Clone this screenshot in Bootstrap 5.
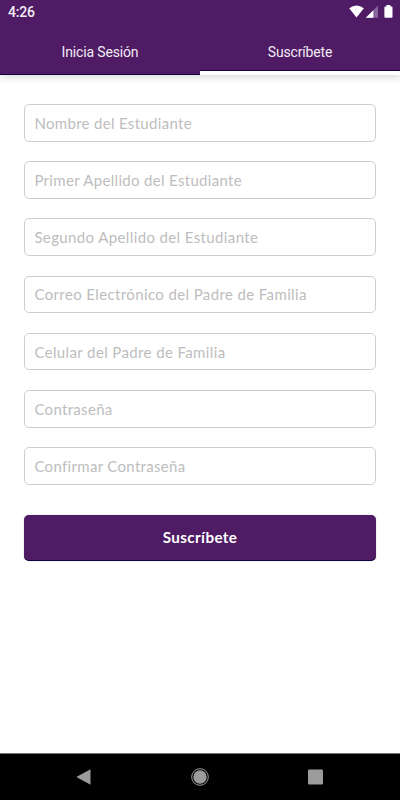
<!DOCTYPE html>
<html lang="es">
<head>
<meta charset="utf-8">
<meta name="viewport" content="width=device-width, initial-scale=1">
<title>Suscríbete</title>
<link href="https://cdn.jsdelivr.net/npm/bootstrap@5.3.0/dist/css/bootstrap.min.css" rel="stylesheet">
<style>
  body { font-family: Lato, "Liberation Sans", sans-serif; height: 800px; overflow: hidden; }
  .app-header { background: #4f1b64; height: 75px; box-shadow: inset 0 -1px #160044, 0 1px 9px rgba(0,0,0,.2); }
  .status-bar { height: 25px; padding: 0 7px 0 8px; color: #f3edf5; font: 500 14px/25px Roboto, sans-serif; letter-spacing: -.2px; }
  .auth-tabs { height: 50px; --bs-nav-link-padding-y: 0; --bs-nav-link-padding-x: 0; }
  .auth-tabs .nav-link { height: 50px; width: 100%; border: 0; border-radius: 0; background: transparent; color: #f2ebf4; font: 400 14px/54px Roboto, sans-serif; letter-spacing: -.16px; }
  .auth-tabs .nav-link.active { border-bottom: 4px solid #fff; box-shadow: inset 0 -1px #160044; }
  .signup { padding: 29px 24.4px 0 24.4px; }
  .signup .form-control { height: 37.6px; margin-bottom: 19.6px; padding: 0 9px; border: 1px solid #cecece; border-radius: 5px; font-size: 15px; letter-spacing: .32px; }
  .signup .form-control::placeholder { color: #bdbdbd; opacity: 1; }
  .signup .wider { letter-spacing: .38px; }
  .send { --bs-btn-color: #fff; --bs-btn-bg: #4f1b64; --bs-btn-hover-bg: #5d2575; --bs-btn-hover-color: #fff; height: 46px; margin-top: 10.4px; padding: 0; border: 0; border-bottom: 1px solid #160044; border-radius: 5px; box-shadow: 0 0 1px rgba(0,0,0,.5); font-size: 15.2px; font-weight: 700; letter-spacing: .35px; }
  .system-bar { height: 47px; border-top: 1px solid #777; background: #000; }
  .system-bar > div { width: 115.6px; }
</style>
<script src="https://cdn.jsdelivr.net/npm/bootstrap@5.3.0/dist/js/bootstrap.bundle.min.js" defer></script>
</head>
<body class="d-flex flex-column bg-white">
<header class="app-header flex-shrink-0">
  <div class="status-bar d-flex justify-content-between">
    <span>4:26</span>
    <svg width="46" height="25" viewBox="347 0 46 25" fill="#fff" aria-hidden="true">
      <path d="M349.2 8.2Q356.5 2.8 363.9 8.2L356.5 17.6Z"/>
      <path d="M378 5.5V17.8H365.8Z" fill="#86649a"/>
      <path d="M373.4 10.2V17.8H365.8Z"/>
      <path d="M386.4 5H390.4V6.5H391.5Q392.5 6.5 392.5 7.5V16.8Q392.5 17.8 391.5 17.8H385.4Q384.4 17.8 384.4 16.8V7.5Q384.4 6.5 385.4 6.5H386.4Z"/>
    </svg>
  </div>
  <ul class="nav nav-fill auth-tabs">
    <li class="nav-item w-50"><button class="nav-link" type="button">Inicia Sesión</button></li>
    <li class="nav-item w-50"><button class="nav-link active" type="button">Suscríbete</button></li>
  </ul>
</header>
<main class="flex-grow-1">
  <form class="signup">
    <input class="form-control" type="text" placeholder="Nombre del Estudiante">
    <input class="form-control" type="text" placeholder="Primer Apellido del Estudiante">
    <input class="form-control wider" type="text" placeholder="Segundo Apellido del Estudiante">
    <input class="form-control wider" type="email" placeholder="Correo Electrónico del Padre de Familia">
    <input class="form-control wider" type="tel" placeholder="Celular del Padre de Familia">
    <input class="form-control" type="password" placeholder="Contraseña">
    <input class="form-control" type="password" placeholder="Confirmar Contraseña">
    <button class="btn send w-100" type="button">Suscríbete</button>
  </form>
</main>
<footer class="system-bar d-flex justify-content-center align-items-center flex-shrink-0">
  <div class="text-center"><svg class="d-block mx-auto" width="18" height="18" fill="#9b9b9b"><path d="M1.3 9 15.5 1.2V16.8Z"/></svg></div>
  <div class="text-center"><svg class="d-block mx-auto" width="18" height="18"><circle cx="9" cy="9" r="8.3" fill="none" stroke="#9b9b9b"/><circle cx="9" cy="9" r="6.7" fill="#9b9b9b"/></svg></div>
  <div class="text-center"><svg class="d-block mx-auto" width="18" height="18"><rect x="1" y="1.5" width="15" height="15" rx="1" fill="#9b9b9b"/></svg></div>
</footer>
</body>
</html>
